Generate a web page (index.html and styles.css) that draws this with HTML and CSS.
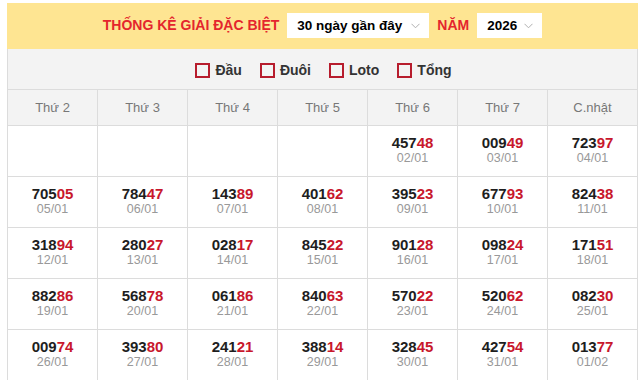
FILE: index.html
```html
<!DOCTYPE html>
<html lang="vi">
<head>
<meta charset="utf-8">
<title>Thống kê giải đặc biệt</title>
<link rel="stylesheet" href="styles.css">
</head>
<body>
<div class="board">
  <div class="topbar">
    <span class="title">THỐNG KÊ GIẢI ĐẶC BIỆT</span>
    <div class="select wide"><span>30 ngày gần đây</span><svg class="chev" width="9" height="6" viewBox="0 0 9 6"><path d="M0.5 0.8 L4.5 4.8 L8.5 0.8" fill="none" stroke="#b0b0b0" stroke-width="1"/></svg></div>
    <span class="title">NĂM</span>
    <div class="select year"><span>2026</span><svg class="chev" width="9" height="6" viewBox="0 0 9 6"><path d="M0.5 0.8 L4.5 4.8 L8.5 0.8" fill="none" stroke="#b0b0b0" stroke-width="1"/></svg></div>
  </div>
  <div class="filters">
    <label class="opt"><span class="box"></span>Đầu</label>
    <label class="opt"><span class="box"></span>Đuôi</label>
    <label class="opt"><span class="box"></span>Loto</label>
    <label class="opt"><span class="box"></span>Tổng</label>
  </div>
  <div class="grid">
    <div class="head">Thứ 2</div><div class="head">Thứ 3</div><div class="head">Thứ 4</div><div class="head">Thứ 5</div><div class="head">Thứ 6</div><div class="head">Thứ 7</div><div class="head">C.nhật</div>

    <div class="cell"></div><div class="cell"></div><div class="cell"></div><div class="cell"></div>
    <div class="cell"><div class="num">457<b>48</b></div><div class="date">02/01</div></div>
    <div class="cell"><div class="num">009<b>49</b></div><div class="date">03/01</div></div>
    <div class="cell"><div class="num">723<b>97</b></div><div class="date">04/01</div></div>

    <div class="cell"><div class="num">705<b>05</b></div><div class="date">05/01</div></div>
    <div class="cell"><div class="num">784<b>47</b></div><div class="date">06/01</div></div>
    <div class="cell"><div class="num">143<b>89</b></div><div class="date">07/01</div></div>
    <div class="cell"><div class="num">401<b>62</b></div><div class="date">08/01</div></div>
    <div class="cell"><div class="num">395<b>23</b></div><div class="date">09/01</div></div>
    <div class="cell"><div class="num">677<b>93</b></div><div class="date">10/01</div></div>
    <div class="cell"><div class="num">824<b>38</b></div><div class="date">11/01</div></div>

    <div class="cell"><div class="num">318<b>94</b></div><div class="date">12/01</div></div>
    <div class="cell"><div class="num">280<b>27</b></div><div class="date">13/01</div></div>
    <div class="cell"><div class="num">028<b>17</b></div><div class="date">14/01</div></div>
    <div class="cell"><div class="num">845<b>22</b></div><div class="date">15/01</div></div>
    <div class="cell"><div class="num">901<b>28</b></div><div class="date">16/01</div></div>
    <div class="cell"><div class="num">098<b>24</b></div><div class="date">17/01</div></div>
    <div class="cell"><div class="num">171<b>51</b></div><div class="date">18/01</div></div>

    <div class="cell"><div class="num">882<b>86</b></div><div class="date">19/01</div></div>
    <div class="cell"><div class="num">568<b>78</b></div><div class="date">20/01</div></div>
    <div class="cell"><div class="num">061<b>86</b></div><div class="date">21/01</div></div>
    <div class="cell"><div class="num">840<b>63</b></div><div class="date">22/01</div></div>
    <div class="cell"><div class="num">570<b>22</b></div><div class="date">23/01</div></div>
    <div class="cell"><div class="num">520<b>62</b></div><div class="date">24/01</div></div>
    <div class="cell"><div class="num">082<b>30</b></div><div class="date">25/01</div></div>

    <div class="cell"><div class="num">009<b>74</b></div><div class="date">26/01</div></div>
    <div class="cell"><div class="num">393<b>80</b></div><div class="date">27/01</div></div>
    <div class="cell"><div class="num">241<b>21</b></div><div class="date">28/01</div></div>
    <div class="cell"><div class="num">388<b>14</b></div><div class="date">29/01</div></div>
    <div class="cell"><div class="num">328<b>45</b></div><div class="date">30/01</div></div>
    <div class="cell"><div class="num">427<b>54</b></div><div class="date">31/01</div></div>
    <div class="cell"><div class="num">013<b>77</b></div><div class="date">01/02</div></div>
  </div>
</div>
</body>
</html>
```
FILE: styles.css
```css
html, body {
  margin: 0;
  padding: 0;
  background: #ffffff;
}
body {
  padding: 3px 0 0 7px;
  font-family: "Liberation Sans", Arial, sans-serif;
}
.board {
  width: 631px;
}
.topbar {
  background: #fee592;
  height: 46px;
  box-sizing: border-box;
  padding: 10px 0 11px;
  display: flex;
  justify-content: center;
  align-items: center;
  gap: 8px;
}
.title {
  color: #e4252d;
  font-weight: bold;
  font-size: 14px;
  line-height: 25px;
}
.select {
  background: #ffffff;
  height: 25px;
  box-sizing: border-box;
  padding: 0 9px 0 10px;
  display: flex;
  align-items: center;
  font-weight: bold;
  font-size: 13.5px;
  color: #000000;
}
.select.wide { width: 142px; }
.select.year { width: 65px; }
.select .chev {
  margin-left: auto;
  flex: none;
}
.filters {
  background: #f3f3f3;
  height: 41px;
  box-sizing: border-box;
  border-left: 1px solid #dcdcdc;
  border-right: 1px solid #dcdcdc;
  border-bottom: 1px solid #dcdcdc;
  display: flex;
  justify-content: center;
  align-items: center;
  gap: 18px;
  padding-left: 2px;
  padding-top: 2px;
}
.opt {
  display: flex;
  align-items: center;
  gap: 5px;
  font-weight: bold;
  font-size: 14px;
  color: #333333;
}
.box {
  width: 15px;
  height: 15px;
  box-sizing: border-box;
  border: 2px solid #b71c2d;
}
.grid {
  display: grid;
  grid-template-columns: repeat(7, 90px);
  border-left: 1px solid #dcdcdc;
}
.head {
  background: #f3f3f3;
  height: 36px;
  box-sizing: border-box;
  border-right: 1px solid #dcdcdc;
  border-bottom: 1px solid #dcdcdc;
  text-align: center;
  font-size: 13px;
  line-height: 35px;
  color: #777777;
}
.cell {
  height: 51px;
  box-sizing: border-box;
  border-right: 1px solid #dcdcdc;
  border-bottom: 1px solid #dcdcdc;
  padding-top: 8px;
  text-align: center;
}
.num {
  font-weight: bold;
  font-size: 15px;
  line-height: 17px;
  color: #1e1e1e;
}
.num b {
  color: #c8172c;
}
.date {
  font-size: 12.5px;
  line-height: 15px;
  color: #999999;
}
```
